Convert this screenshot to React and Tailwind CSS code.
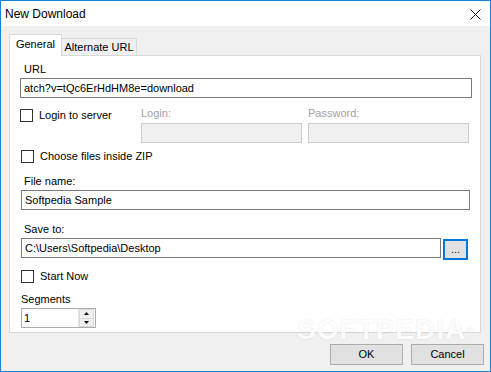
import React from 'react';

const font = { fontFamily: '"Liberation Sans", Arial, sans-serif' };

function Checkbox({ label, className = '' }) {
  return (
    <div className={`flex items-center h-[13px] ${className}`}>
      <div className="w-[13px] h-[13px] border border-[#333333] bg-white shrink-0" />
      <span className="ml-[6px] text-[11px] leading-[13px] text-black">{label}</span>
    </div>
  );
}

function Label({ children, className = '', muted = false }) {
  return (
    <div className={`h-[14px] leading-[14px] text-[11px] ${muted ? 'text-[#a0a0a0]' : 'text-black'} ${className}`}>
      {children}
    </div>
  );
}

function TextBox({ value, className = '' }) {
  return (
    <div className={`h-[20px] border border-[#7a7a7a] bg-white flex items-center pl-[3px] text-[11px] text-black overflow-hidden whitespace-nowrap ${className}`}>
      {value}
    </div>
  );
}

export default function App() {
  return (
    <div style={font} className="relative w-[491px] h-[372px] border border-[#1883d7] bg-[#f0f0f0] flex flex-col overflow-hidden select-none">
      {/* title bar */}
      <div className="h-[25px] bg-white flex items-center justify-between pl-[4px] pr-[9px] shrink-0">
        <span className="text-[12px] text-black">New Download</span>
        <svg width="11" height="11" viewBox="0 0 11 11" className="mt-[1px]">
          <path d="M0.5 0.5 L10.5 10.5 M10.5 0.5 L0.5 10.5" stroke="#111" strokeWidth="1" />
        </svg>
      </div>

      {/* tabs */}
      <div className="flex items-end ml-[8px] mt-[8px] h-[21px]">
        <div className="relative z-10 -mb-px w-[53px] h-[22px] bg-white border border-b-0 border-[#d9d9d9] flex items-center justify-center text-[11px] pb-[2px]">
          General
        </div>
        <div className="w-[75px] h-[17px] bg-[#f0f0f0] border border-l-0 border-b-0 border-[#d9d9d9] flex items-center justify-center text-[11px]">
          Alternate URL
        </div>
      </div>

      {/* panel */}
      <div className="ml-[8px] w-[472px] h-[278px] bg-white border border-[#d9d9d9] pt-[6px] pl-[10px] flex flex-col">
        <Label className="pl-[4px]">URL</Label>
        <TextBox className="mt-[2px] w-[452px]" value="atch?v=tQc6ErHdHM8e=download" />

        <div className="flex mt-[8px]">
          <div className="w-[121px] pt-[3px]">
            <Checkbox label="Login to server" />
          </div>
          <div className="w-[161px]">
            <Label muted>Login:</Label>
            <div className="mt-[3px] h-[20px] border border-[#cccccc] bg-[#f0f0f0]" />
          </div>
          <div className="ml-[6px] w-[161px]">
            <Label muted>Password:</Label>
            <div className="mt-[3px] h-[20px] border border-[#cccccc] bg-[#f0f0f0]" />
          </div>
        </div>

        <Checkbox label="Choose files inside ZIP" className="mt-[7px] ml-[1px]" />

        <Label className="mt-[11px] pl-[4px]">File name:</Label>
        <TextBox className="mt-[2px] ml-[1px] w-[449px]" value="Softpedia Sample" />

        <Label className="mt-[12px] pl-[4px]">Save to:</Label>
        <div className="flex items-start mt-[2px] ml-[1px]">
          <TextBox className="w-[420px]" value="C:\Users\Softpedia\Desktop" />
          <div className="ml-[2px] mt-[1px] w-[25px] h-[21px] border-2 border-[#0078d7] bg-[#e1e1e1] flex items-end justify-center pb-[3px] text-[11px] leading-[11px] text-[#2b0f4a]">
            ...
          </div>
        </div>

        <Checkbox label="Start Now" className="mt-[10px] ml-[1px]" />

        <Label className="mt-[9px] ml-[1px]">Segments</Label>
        <div className="mt-[2px] ml-[1px] w-[75px] h-[20px] border border-[#acacac] bg-white flex">
          <div className="flex-1 flex items-center pl-[2px] text-[11px]">1</div>
          <div className="w-[16px] flex flex-col border-l border-[#e3e3e3] mr-[1px]">
            <div className="flex-1 flex items-center justify-center bg-[#f0f0f0] border border-[#dadada]">
              <svg width="5" height="3" viewBox="0 0 5 3"><path d="M2.5 0 L5 3 L0 3 Z" fill="#111" /></svg>
            </div>
            <div className="flex-1 flex items-center justify-center bg-[#f0f0f0] border border-t-0 border-[#dadada]">
              <svg width="5" height="3" viewBox="0 0 5 3"><path d="M0 0 L5 0 L2.5 3 Z" fill="#111" /></svg>
            </div>
          </div>
        </div>
      </div>

      {/* buttons */}
      <div className="flex justify-end gap-[8px] mt-[11px] pr-[6px]">
        <div className="w-[73px] h-[21px] bg-[#e1e1e1] border border-[#adadad] flex items-center justify-center text-[11px]">OK</div>
        <div className="w-[73px] h-[21px] bg-[#e1e1e1] border border-[#adadad] flex items-center justify-center text-[11px]">Cancel</div>
      </div>

      {/* watermark */}
      <div className="absolute left-[296px] top-[314px] text-[28px] leading-[30px] font-bold tracking-[1px] text-white/90 [text-shadow:0_0_2px_rgba(0,0,0,0.12)] pointer-events-none">
        SOFTPEDIA<span className="text-[9px] align-top">®</span>
      </div>
    </div>
  );
}
